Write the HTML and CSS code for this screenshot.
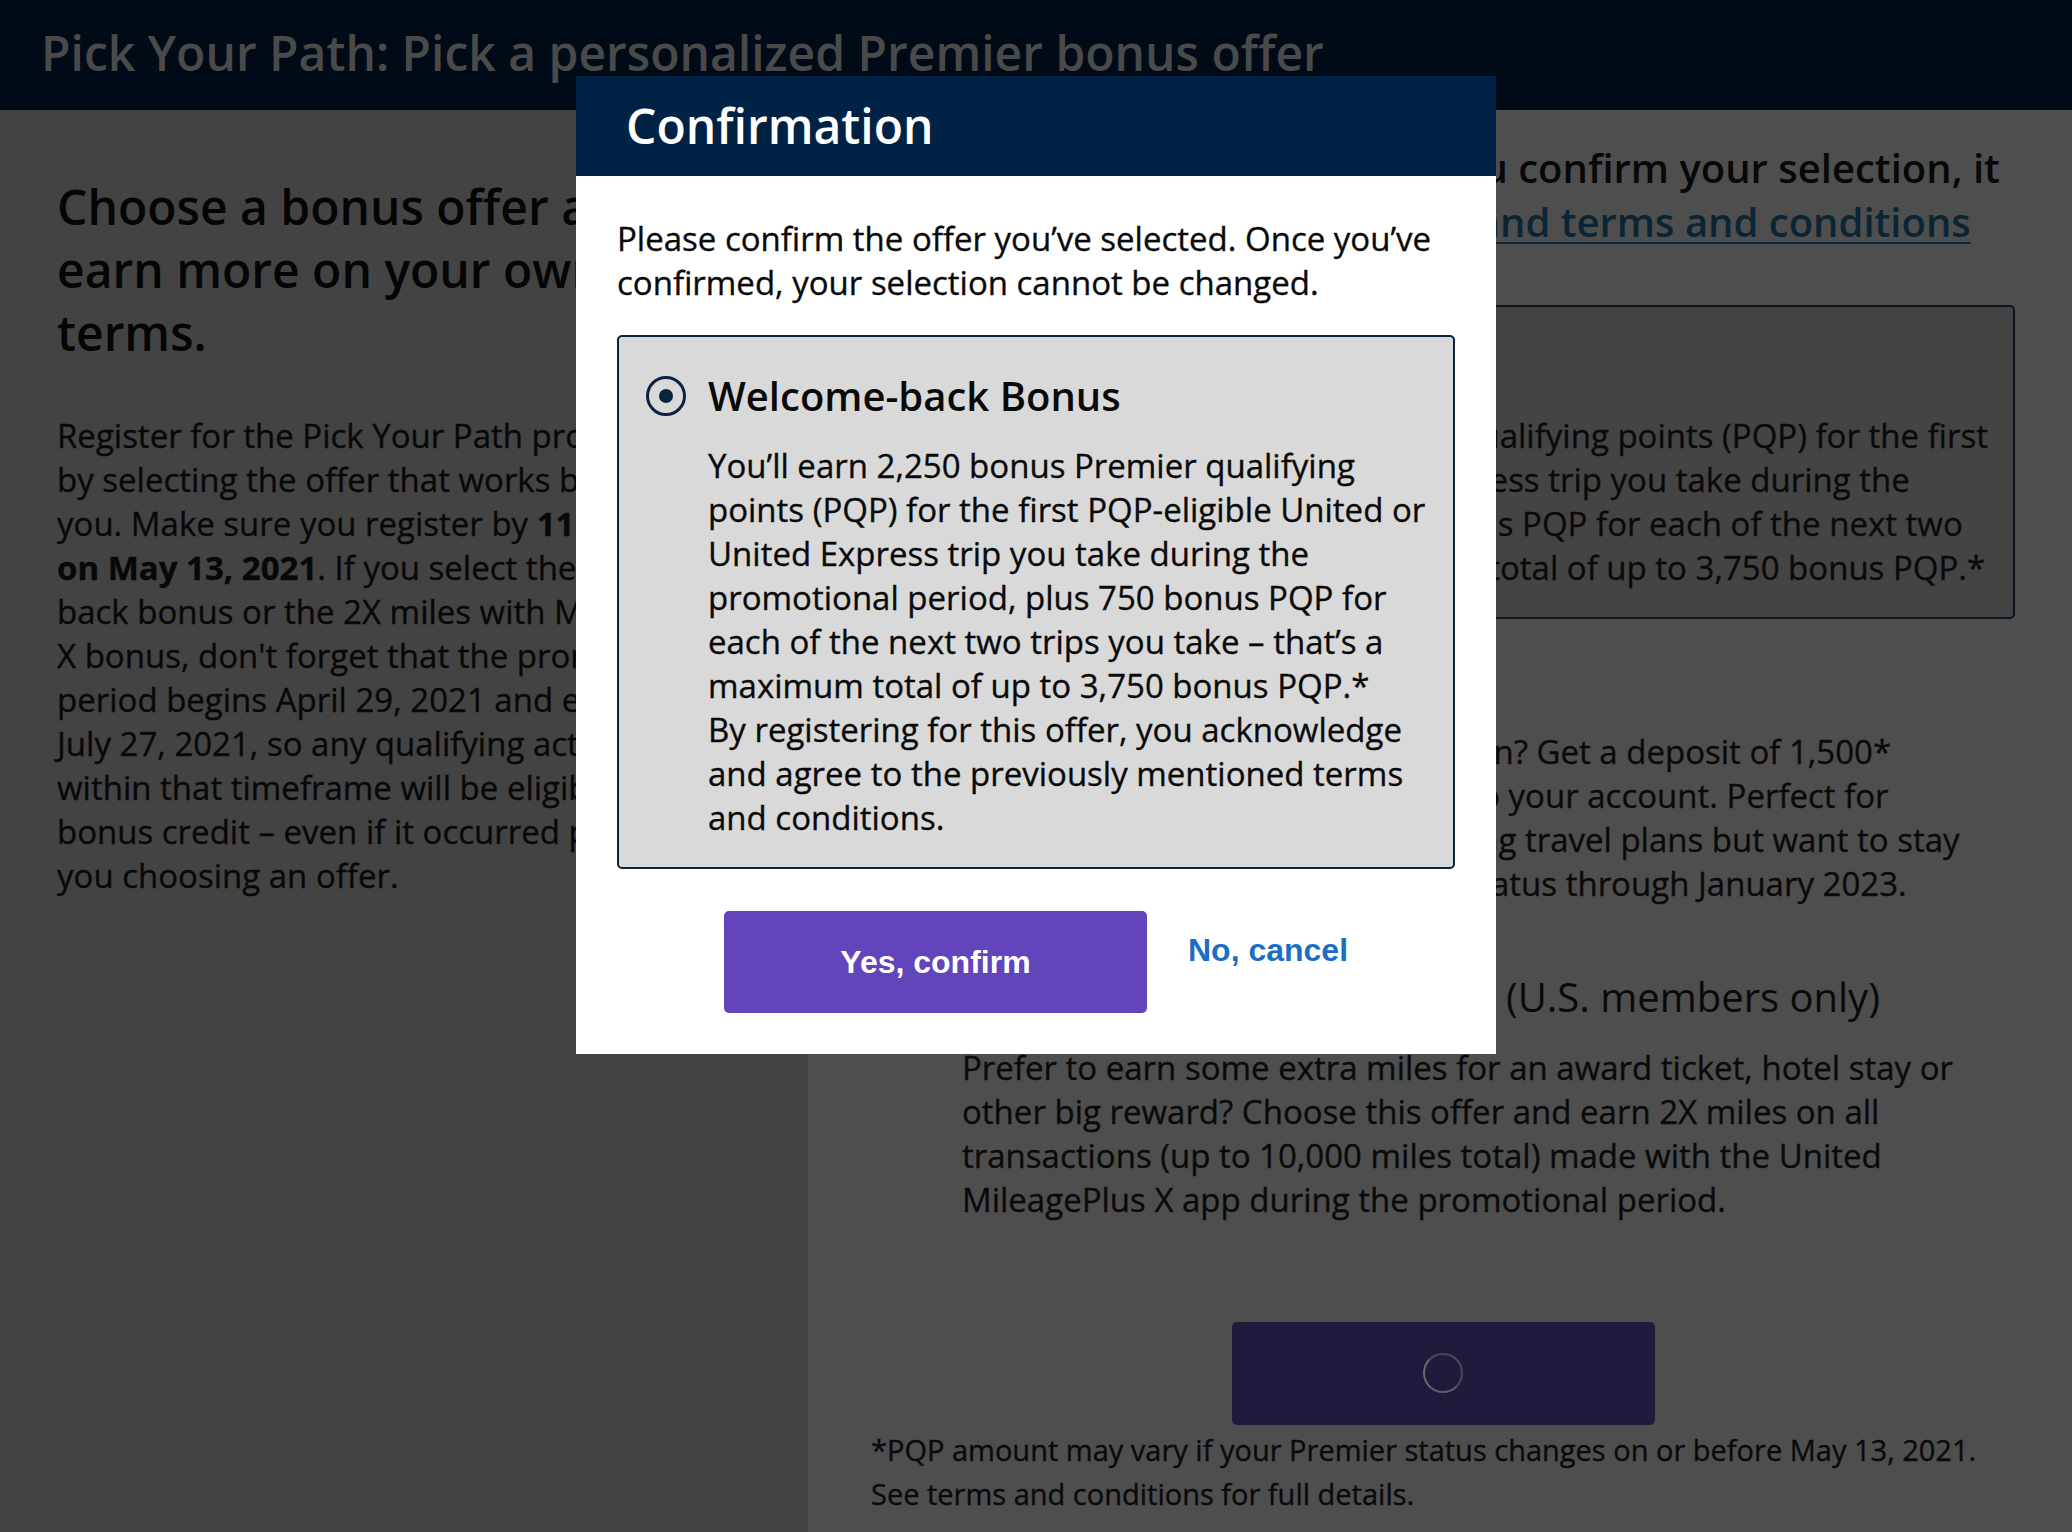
FILE: index.html
```html
<!DOCTYPE html>
<html lang="en">
<head>
<meta charset="utf-8">
<title>Pick Your Path</title>
<link rel="stylesheet" href="styles.css">
</head>
<body>
<header class="topbar">
  <h1 class="topbar-title">Pick Your Path: Pick a personalized Premier bonus offer</h1>
</header>
<main class="layout">
  <section class="intro">
    <h2 class="intro-title">Choose a bonus offer and<br>earn more on your own<br>terms.</h2>
    <p class="intro-text">Register for the Pick Your Path promotion<br>by selecting the offer that works best for<br>you. Make sure you register by <strong>11:59 p.m. CT</strong><br><strong>on May 13, 2021</strong>. If you select the Welcome-<br>back bonus or the 2X miles with MileagePlus<br>X bonus, don't forget that the promotional<br>period begins April 29, 2021 and ends<br>July 27, 2021, so any qualifying activity<br>within that timeframe will be eligible for<br>bonus credit – even if it occurred prior to<br>you choosing an offer.</p>
  </section>
  <section class="offers">
    <p class="offers-lead">Choose only one offer. When you confirm your selection, it<br>cannot be changed. See <a href="#" class="offers-link">details and terms and conditions</a></p>
    <div class="option-list">
      <div class="option option-selected">
        <div class="option-head"><span class="radio radio-on radio-dim"></span><h3 class="option-title">Welcome-back Bonus</h3></div>
        <p class="option-desc">You’ll earn 2,250 bonus Premier qualifying points (PQP) for the first PQP-eligible United or United Express trip you take during the promotional period, plus 750 bonus PQP for each of the next two trips you take – that’s a maximum total of up to 3,750 bonus PQP.*</p>
      </div>
      <div class="option">
        <div class="option-head"><span class="radio radio-dim"></span><h3 class="option-title">1,500 PQP deposit</h3></div>
        <p class="option-desc option-desc-lines">Not planning to travel anytime soon? Get a deposit of 1,500*<br>PQP that will instantly get added to your account. Perfect for<br>members who would have changing travel plans but want to stay<br>on track to extend their Premier status through January 2023.</p>
      </div>
      <div class="option">
        <div class="option-head"><span class="radio radio-dim"></span><h3 class="option-title">2X miles with MileagePlus X <span class="title-note">(U.S. members only)</span></h3></div>
        <p class="option-desc">Prefer to earn some extra miles for an award ticket, hotel stay or other big reward? Choose this offer and earn 2X miles on all transactions (up to 10,000 miles total) made with the United MileagePlus X app during the promotional period.</p>
      </div>
    </div>
    <div class="submit-row">
      <button class="submit-btn" type="button" aria-label="Submitting"><span class="spinner"></span></button>
    </div>
    <p class="footnote">*PQP amount may vary if your Premier status changes on or before May 13, 2021. See terms and conditions for full details.</p>
  </section>
</main>

<div class="modal" role="dialog" aria-labelledby="modal-title">
  <div class="modal-header">
    <h2 class="modal-title" id="modal-title">Confirmation</h2>
  </div>
  <div class="modal-body">
    <p class="modal-text">Please confirm the offer you’ve selected. Once you’ve confirmed, your selection cannot be changed.</p>
    <div class="option option-confirm">
      <div class="option-head"><span class="radio radio-on"></span><h3 class="option-title">Welcome-back Bonus</h3></div>
      <p class="option-desc">You’ll earn 2,250 bonus Premier qualifying points (PQP) for the first PQP-eligible United or United Express trip you take during the promotional period, plus 750 bonus PQP for each of the next two trips you take – that’s a maximum total of up to 3,750 bonus PQP.*<br>By registering for this offer, you acknowledge and agree to the previously mentioned terms and conditions.</p>
    </div>
    <div class="modal-actions">
      <button class="btn-confirm" type="button">Yes, confirm</button>
      <a href="#" class="btn-cancel">No, cancel</a>
    </div>
  </div>
</div>
</body>
</html>
```
FILE: styles.css
```css
* {
  box-sizing: border-box;
}

html,
body {
  margin: 0;
  height: 100%;
}

body {
  position: relative;
  overflow: hidden;
  font-family: "Open Sans", "DejaVu Sans", sans-serif;
  color: #0a0a0a;
  background: #434343;
}

/* ---------- top bar ---------- */
.topbar {
  height: 110px;
  padding: 21px 0 0 41px;
  background: #010b17;
}

.topbar-title {
  margin: 0;
  font-size: 48px;
  font-weight: 600;
  line-height: 64px;
  color: #4a4a4a;
  white-space: nowrap;
}

/* ---------- page layout ---------- */
.layout {
  display: grid;
  grid-template-columns: 808px minmax(0, 1fr);
  height: calc(100vh - 110px);
}

.intro {
  min-width: 0;
  padding: 64.6px 0 0 57px;
  background: #434343;
  overflow: hidden;
}

.intro-title {
  margin: 0;
  font-size: 48px;
  font-weight: 600;
  line-height: 63.4px;
  color: #050505;
  white-space: nowrap;
}

.intro-text {
  margin: 49.4px 0 0;
  font-size: 33px;
  line-height: 44px;
  color: #080808;
  white-space: nowrap;
  -webkit-text-stroke: 0.35px currentColor;
}

.intro-text strong {
  font-weight: 700;
}

.offers {
  min-width: 0;
  padding: 31px 57px 0 63px;
  background: #4e4e4e;
  overflow: hidden;
}

.offers-lead {
  margin: 0;
  font-size: 40px;
  font-weight: 600;
  line-height: 54px;
  color: #080808;
  white-space: nowrap;
}

.offers-lead .offers-link {
  color: #0a2535;
  text-decoration: underline;
  text-decoration-color: #0a2535;
  text-decoration-thickness: 2px;
  text-underline-offset: 5px;
}

.option-list {
  display: flex;
  flex-direction: column;
  gap: 2px;
  margin-top: 55.9px;
}

/* ---------- option card ---------- */
.option {
  border: 2px solid transparent;
  border-radius: 5px;
  padding: 31.5px 10px 27px 27px;
}

.option-selected {
  background: #444444;
  border-color: #0a1522;
}

.option-head {
  display: flex;
  align-items: center;
  gap: 22px;
}

.radio {
  flex: none;
  display: grid;
  place-items: center;
  width: 40px;
  height: 40px;
  border: 3px solid #0c2340;
  border-radius: 50%;
}

.radio-dim {
  border-color: #0a1522;
}

.radio-on::after {
  content: "";
  width: 14px;
  height: 14px;
  border-radius: 50%;
  background: #0c2340;
}

.radio-dim.radio-on::after {
  background: #0a1522;
}

.option-title {
  margin: 0;
  font-size: 40px;
  font-weight: 600;
  line-height: 54px;
  white-space: nowrap;
}

.title-note {
  font-weight: 400;
}

.option-desc {
  margin: 21.5px 0 0 62px;
  font-size: 33px;
  line-height: 44px;
  -webkit-text-stroke: 0.35px currentColor;
}

.option-desc-lines {
  white-space: nowrap;
}

/* ---------- submit ---------- */
.submit-row {
  display: flex;
  justify-content: center;
  margin-top: 71px;
}

.submit-btn {
  display: grid;
  place-items: center;
  width: 423px;
  height: 103px;
  padding: 0;
  border: none;
  border-radius: 5px;
  background: #211a3d;
}

.spinner {
  width: 40px;
  height: 40px;
  border: 2px solid #4a4858;
  border-left-color: #6a6a6a;
  border-bottom-color: #5e5e66;
  border-radius: 50%;
}

.footnote {
  margin: 3px 0 0;
  font-size: 29px;
  line-height: 44px;
  color: #0a0a0a;
  -webkit-text-stroke: 0.35px currentColor;
}

/* ---------- modal ---------- */
.modal {
  position: absolute;
  top: 76px;
  left: 50%;
  width: 920px;
  transform: translateX(-50%);
  background: #ffffff;
}

.modal-header {
  height: 100px;
  padding-left: 50px;
  background: #002244;
}

.modal-title {
  margin: 0;
  font-size: 48px;
  font-weight: 600;
  line-height: 100px;
  color: #ffffff;
}

.modal-body {
  padding: 40.5px 41px 41px;
}

.modal-text {
  margin: 0;
  font-size: 33px;
  line-height: 44px;
  color: #0a0a0a;
  -webkit-text-stroke: 0.35px currentColor;
}

.option-confirm {
  margin-top: 30.5px;
  background: #d9d9d9;
  border-color: #0c2340;
  color: #0a0a0a;
}

.modal-actions {
  display: flex;
  justify-content: center;
  align-items: flex-start;
  gap: 41px;
  margin-top: 42px;
}

.btn-confirm {
  width: 423px;
  height: 102px;
  padding: 0;
  border: none;
  border-radius: 5px;
  background: #6244bb;
  color: #ffffff;
  font-family: "Liberation Sans", Arial, sans-serif;
  font-size: 32px;
  font-weight: 700;
}

.btn-cancel {
  margin-top: 21px;
  font-family: "Liberation Sans", Arial, sans-serif;
  font-size: 32px;
  font-weight: 700;
  color: #1b6ec4;
  text-decoration: none;
}
```
